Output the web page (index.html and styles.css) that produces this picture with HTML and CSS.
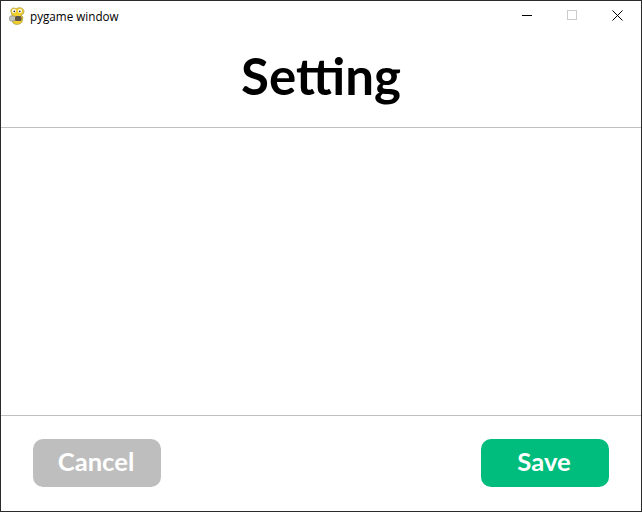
FILE: index.html
```html
<!DOCTYPE html>
<html lang="en">
<head>
    <meta charset="UTF-8">
    <meta name="viewport" content="width=device-width, initial-scale=1.0">
    <title>pygame window</title>
    <link rel="stylesheet" href="styles.css">
</head>
<body>
    <div class="window">
        <div class="titlebar">
            <svg class="app-icon" width="16" height="18" viewBox="0 0 16 18">
                <path d="M2 5 C1 1 5 0 7 2 C9 0 14 0 15 4 C15 7 13 8 12 8 L14 10 L13 15 C11 18 6 18 4 16 L3 11 L3 8 Z" fill="#f0cf2e" stroke="#a8963a" stroke-width="0.7"/>
                <rect x="0.5" y="9" width="6" height="5" rx="1.5" fill="#c2c2b8" stroke="#77776c" stroke-width="0.5"/>
                <rect x="6" y="9" width="6.5" height="5" rx="1.5" fill="#5d5648"/>
                <circle cx="5" cy="4" r="2" fill="#fff"/>
                <circle cx="11" cy="4" r="2" fill="#fff"/>
                <circle cx="5.3" cy="4.3" r="0.9" fill="#333"/>
                <circle cx="10.8" cy="4.3" r="0.9" fill="#333"/>
            </svg>
            <span class="window-name">pygame window</span>
            <div class="controls">
                <svg class="control" width="11" height="11" viewBox="0 0 11 11"><path d="M0 5.5H10" stroke="#000" fill="none"/></svg>
                <svg class="control" width="11" height="11" viewBox="0 0 11 11"><rect x="0.5" y="0.5" width="9" height="9" stroke="#ccc" fill="none"/></svg>
                <svg class="control" width="11" height="11" viewBox="0 0 11 11"><path d="M0.5 0.5L10.5 10.5M10.5 0.5L0.5 10.5" stroke="#000" fill="none"/></svg>
            </div>
        </div>
        <div class="header">
            <h1 class="heading">Setting</h1>
        </div>
        <div class="content"></div>
        <div class="footer">
            <button class="btn cancel">Cancel</button>
            <button class="btn save">Save</button>
        </div>
    </div>
</body>
</html>
```

FILE: styles.css
```css
* {
    box-sizing: border-box;
}

body {
    margin: 0;
    background-color: white;
}

.window {
    width: 642px;
    height: 512px;
    display: flex;
    flex-direction: column;
    border: 1px solid #2b2b2b;
    background-color: white;
}

.titlebar {
    height: 29px;
    display: flex;
    align-items: center;
    padding-left: 8px;
}

.app-icon {
    margin-right: 5px;
}

.window-name {
    font-family: "Open Sans", sans-serif;
    font-size: 11.7px;
    color: #000;
}

.controls {
    margin-left: auto;
    display: flex;
    align-items: center;
    gap: 34px;
    padding-right: 18px;
}

.header {
    height: 98px;
    display: flex;
    justify-content: center;
    align-items: flex-start;
    border-bottom: 1px solid #c0c0c0;
}

.heading {
    margin: 0;
    font-family: Lato, sans-serif;
    font-size: 51px;
    font-weight: 700;
    line-height: 92px;
    color: #000;
}

.content {
    flex: 1;
}

.footer {
    height: 96px;
    display: flex;
    justify-content: space-between;
    align-items: flex-start;
    padding: 23px 32px 0;
    border-top: 1px solid #c0c0c0;
}

.btn {
    width: 128px;
    height: 48px;
    border: none;
    border-radius: 10px;
    font-family: Lato, sans-serif;
    font-size: 25.6px;
    font-weight: 700;
    color: white;
    padding: 0 2px 5px 0;
}

.cancel {
    background-color: #bebebe;
}

.save {
    background-color: #00bd7e;
}
```
